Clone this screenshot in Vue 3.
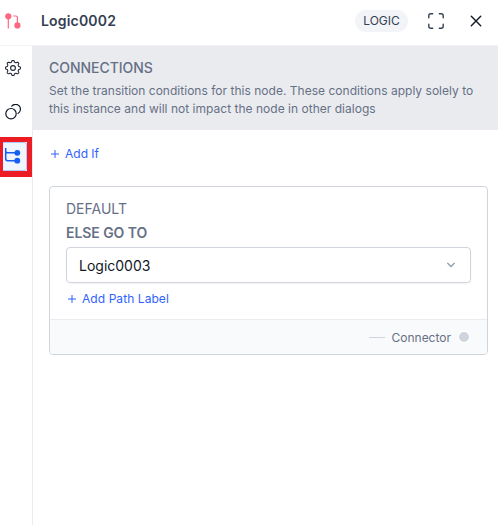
<script setup>
import { ref } from 'vue'

const title = ref('Logic0002')
const target = ref('Logic0003')

const gear = (() => {
  const points = []
  for (let i = 0; i <= 128; i++) {
    const a = (i / 128) * Math.PI * 2
    const r = 6.65 + 0.85 * Math.tanh(2 * Math.cos(8 * a))
    points.push(`${(8 + r * Math.sin(a)).toFixed(2)} ${(8 - r * Math.cos(a)).toFixed(2)}`)
  }
  return `M${points.join('L')}Z`
})()
</script>

<template>
  <div class="panel">
    <header class="header">
      <svg class="node-icon" width="18" height="18" viewBox="0 0 18 18">
        <g fill="none" stroke="#ff6683" stroke-width="1.2">
          <path d="M4.3 4v12.4M9.2 4h2.7q1.5 0 1.5 1.5V12" />
        </g>
        <circle cx="4.3" cy="4.3" r="3.1" fill="#ff6683" />
        <circle cx="13.4" cy="13.4" r="3.1" fill="#ff6683" />
      </svg>
      <h1 class="title">{{ title }}</h1>
      <span class="tag">LOGIC</span>
      <svg class="expand" width="16" height="16" viewBox="0 0 16 16" fill="none" stroke="#344054" stroke-width="1.4" stroke-linecap="round">
        <path d="M.8 4.7V2.8q0-2 2-2h1.9M11.3.8h1.9q2 0 2 2v1.9M15.2 11.3v1.9q0 2-2 2h-1.9M4.7 15.2H2.8q-2 0-2-2v-1.9" />
      </svg>
      <svg class="close" width="12" height="12" viewBox="0 0 12 12" fill="none" stroke="#101828" stroke-width="1.4" stroke-linecap="round">
        <path d="M1.3 1.3l9.4 9.4M10.7 1.3l-9.4 9.4" />
      </svg>
    </header>
    <div class="body">
      <nav class="rail">
        <svg class="gear" width="16" height="16" viewBox="0 0 16 16" fill="none" stroke="#1d2433" stroke-width="1.1">
          <path :d="gear" />
          <circle cx="8" cy="8" r="2.4" />
        </svg>
        <svg class="rings" width="16" height="16" viewBox="0 0 16 16" fill="none" stroke="#101828" stroke-width="1.2" stroke-linecap="round">
          <circle cx="6" cy="9.7" r="5.2" />
          <path d="M6.7 2.1A4.9 4.9 0 1 1 13 9.4" />
        </svg>
        <div class="marker">
          <div class="active">
            <svg width="18" height="16" viewBox="0 0 18 16">
              <path d="M2.7 0v10.8q0 1.9 1.9 1.9H14M2.7 2.9q0 1.9 1.9 1.9H14" fill="none" stroke="#155eef" stroke-width="1.5" />
              <circle cx="14.3" cy="4.8" r="2.9" fill="#155eef" />
              <circle cx="14.3" cy="12.7" r="2.9" fill="#155eef" />
            </svg>
          </div>
        </div>
      </nav>
      <main class="main">
        <section class="intro">
          <h2>CONNECTIONS</h2>
          <p>Set the transition conditions for this node. These conditions apply solely to<br>this instance and will not impact the node in other dialogs</p>
        </section>
        <button class="add add-if">
          <svg width="8" height="8" viewBox="0 0 8 8"><path d="M4 0v8M0 4h8" stroke="#2f62ff" /></svg>
          <span class="if-text">Add If</span>
        </button>
        <section class="card">
          <div class="card-body">
            <div class="name">DEFAULT</div>
            <div class="rule">ELSE GO TO</div>
            <div class="select">
              <span>{{ target }}</span>
              <svg width="10" height="6" viewBox="0 0 10 6" fill="none" stroke="#98a2b3" stroke-width="1.4" stroke-linecap="round"><path d="M1.7 1.2L5 4.4 8.3 1.2" /></svg>
            </div>
            <button class="add add-label">
              <svg width="8" height="8" viewBox="0 0 8 8"><path d="M4 0v8M0 4h8" stroke="#2f62ff" /></svg>
              <span class="label-text">Add Path Label</span>
            </button>
          </div>
          <footer class="card-foot">
            <span class="line"></span>
            <span class="connector">Connector</span>
            <span class="dot"></span>
          </footer>
        </section>
      </main>
    </div>
  </div>
</template>

<style>
body { background: #fff; overflow: hidden; }
</style>

<style scoped>
.panel { width: 498px; height: 525px; display: flex; flex-direction: column; background: #fff; font-family: Inter, "Liberation Sans", sans-serif; color: #667085; }
.panel * { box-sizing: border-box; }
svg { display: block; flex: none; }
h1, h2, p { margin: 0; }
.header { height: 46px; flex: none; display: flex; align-items: center; padding: 0 16px 4px 4px; border-bottom: 1px solid #f3f4f6; }
.title { margin-left: 19px; flex: 1; font-size: 14px; line-height: 20px; font-weight: 600; letter-spacing: 0.18px; color: #344054; }
.tag { width: 53px; height: 22px; border-radius: 11px; background: #f2f4f7; color: #344054; font-size: 12px; line-height: 22px; text-align: center; letter-spacing: -0.05px; }
.expand { margin-left: 20px; }
.close { margin-left: 26px; }
.body { flex: 1; display: flex; min-height: 0; }
.rail { width: 33px; border-right: 1px solid #eaecf0; display: flex; flex-direction: column; padding: 14px 0 0; }
.gear { margin-left: 5px; }
.rings { margin: 28px 0 0 5px; }
.marker { width: 32px; height: 40px; margin-top: 17px; border: solid #ed1c24; border-width: 5px 5px 6px 3px; }
.active { height: 29px; display: flex; align-items: flex-start; padding-top: 5px; background: #eff4ff; border: 1px solid #b2c6f7; border-left: 0; border-radius: 0 3px 3px 0; }
.main { flex: 1; min-width: 0; }
.intro { height: 84px; padding: 12px 16px 0; background: #eaebef; }
.intro h2 { font-size: 14px; line-height: 20px; font-weight: 550; letter-spacing: -0.03px; }
.intro p { margin-top: 4px; font-size: 12px; line-height: 18px; white-space: nowrap; letter-spacing: 0.02px; }
.add { display: flex; align-items: center; gap: 6px; padding: 0; border: 0; background: none; font: 400 12px/18px Inter, sans-serif; color: #2f62ff; }
.add-if { margin: 15px 0 0 18px; }
.label-text { letter-spacing: 0.07px; }
.card { margin: 23px 10px 0 16px; height: 169px; border: 1px solid #d0d5dd; border-radius: 4px; overflow: hidden; }
.card-body { height: 132px; padding: 12px 16px 0; }
.name { font-size: 14px; line-height: 20px; }
.rule { margin-top: 4px; font-size: 14px; line-height: 20px; font-weight: 600; letter-spacing: -0.07px; }
.select { height: 36px; margin-top: 4px; padding: 0 14px 0 12px; display: flex; align-items: center; justify-content: space-between; border: 1px solid #d0d5dd; border-radius: 4px; box-shadow: 0 1px 2px #1018280d; color: #101828; font-size: 14px; }
.add-label { margin: 7px 0 0 2px; }
.card-foot { height: 35px; display: flex; align-items: center; justify-content: flex-end; padding-right: 18px; border-top: 1px solid #eaecf0; background: #f9fafb; font-size: 12px; }
.line { width: 16px; height: 1px; background: #d0d5dd; margin-right: 6px; }
.dot { width: 10px; height: 10px; margin-left: 8px; border-radius: 50%; background: #d0d5dd; box-shadow: 0 0 0 1px #fff; }
</style>
